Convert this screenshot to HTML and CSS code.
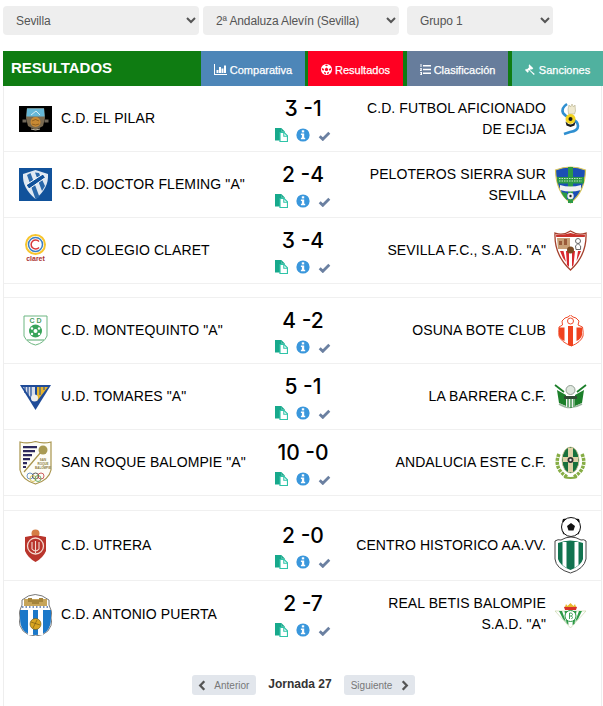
FILE: index.html
```html
<!DOCTYPE html>
<html lang="es">
<head>
<meta charset="utf-8">
<title>Resultados</title>
<link rel="stylesheet" href="styles.css">
</head>
<body>
<svg class="defs" width="0" height="0" aria-hidden="true">
  <symbol id="i-files" viewBox="0 0 13 14">
    <path d="M0 0h6.500v3.500h3.500v1H5.500v8H0z" fill="#17a98c"/>
    <path d="M6 .5h.8l3 3H6.800z" fill="#17a98c"/>
    <path d="M5 4.500h4.200l3.300 3.300v5.700H5z" fill="#fff" stroke="#2fc4a8" stroke-width="1.200"/>
    <path d="M8.800 4.800v3.400h3.400" fill="none" stroke="#2fc4a8" stroke-width="1.100"/>
  </symbol>
  <symbol id="i-info" viewBox="0 0 14 14">
    <circle cx="7" cy="7" r="6.600" fill="#3a97dc"/>
    <rect x="5.800" y="2.300" width="2.400" height="2.100" fill="#fff"/>
    <path d="M4.900 5.500h3.300v4.300h1v1.500H4.900V9.800h1V7H4.900z" fill="#fff"/>
  </symbol>
  <symbol id="i-check" viewBox="0 0 13 10">
    <path d="M1.700 5.200 4.800 8.300 11.300 1.800" fill="none" stroke="#6b80a1" stroke-width="2.800"/>
  </symbol>
</svg>

<form class="filters">
  <select class="filter filter-wide"><option>Sevilla</option></select>
  <select class="filter filter-wide"><option>2ª Andaluza Alevín (Sevilla)</option></select>
  <select class="filter filter-narrow"><option>Grupo 1</option></select>
</form>

<header class="bar">
  <h1 class="bar-title">RESULTADOS</h1>
  <nav class="tabs">
    <a class="tab tab-blue">
      <svg width="13" height="11" viewBox="0 0 13 11"><path d="M0 0h1v10h12v1H0z" fill="#fff"/><path d="M2.500 6h2v3h-2zM5 3h2v6H5zM7.500 4.500h2V9h-2zM10 1.500h2V9h-2z" fill="#fff"/></svg>
      Comparativa
    </a>
    <a class="tab tab-red">
      <svg width="11" height="11" viewBox="0 0 11 11"><circle cx="5.500" cy="5.500" r="5.500" fill="#fff"/><path d="M5.500 3.600 7.300 4.900 6.600 7H4.400L3.700 4.900zM5.500.6 3.900 1.200 5.500 2.300 7.100 1.200zM.9 4 1 5.900l1.600.9.500-1.900zM10.100 4 10 5.900l-1.600.9-.500-1.900zM3 9.300l2 1-.2-1.700-1.700-.5zM8 9.300l-2 1 .2-1.700 1.700-.5z" fill="#ff0022"/></svg>
      Resultados
    </a>
    <a class="tab tab-slate">
      <svg width="11" height="11" viewBox="0 0 11 11"><path d="M3 1h8v1.500H3zM3 4.700h8v1.500H3zM3 8.500h8V10H3zM.5 0h1v3h-1zM0 4.300h2v1L1 6.300h1v.7H0V6l1-1H0zM0 8h2v3H0v-.7h1v-.5H.5v-.6H1v-.5H0z" fill="#fff"/></svg>
      Clasificación
    </a>
    <a class="tab tab-teal">
      <svg width="11" height="11" viewBox="0 0 11 11"><path d="M4.200.3 8.300 4.300 6.800 5.800 6 5l-1 1 4.800 4-1 1L4 6 3.200 6.900l.7.700-1.200 1.200L0 6l1.200-1.200.6.600 2.500-2.500-.7-.700z" fill="#fff"/></svg>
      Sanciones
    </a>
  </nav>
</header>

<main class="panel">

  <article class="match">
    <div class="team">
      <svg class="crest" width="33" height="26" viewBox="0 0 33 26"><rect width="33" height="26" fill="#000"/><path d="M8 2h17l1 10-2 8-7.500 4-7.500-4-2-8z" fill="#7a6a50"/><path d="M8 2.500h17l.6 8H7.400z" fill="#66b8d8"/><path d="M12 9l5-4 4 4" stroke="#d8ecf2" fill="none"/><circle cx="16.500" cy="16" r="5" fill="#c98a34"/><path d="M13 15q3.500-3 7 0M13 18q3.500 2 7 0" stroke="#7a4f17" fill="none" stroke-width=".7"/><path d="M3.500 15h4M25.500 15h4" stroke="#6f6658" stroke-width="3"/><path d="M12 23q4.500 2 9 0" stroke="#c2b8a6" fill="none"/></svg>
      <span class="name">C.D. EL PILAR</span>
    </div>
    <div class="result">
      <div class="score">3 -1</div>
      <div class="actions"><svg class="a-files"><use href="#i-files"/></svg><svg class="a-info"><use href="#i-info"/></svg><svg class="a-check"><use href="#i-check"/></svg></div>
    </div>
    <div class="team team-away">
      <span class="name">C.D. FUTBOL AFICIONADO DE ECIJA</span>
      <svg class="crest" width="33" height="34" viewBox="0 0 33 34"><path d="M13 2Q7 6 9 11q2 3 7 5 8 3 8 8 0 5-8 6l-6 2" fill="none" stroke="#2f8fd0" stroke-width="2.600"/><path d="M14 7l1-4 1.500 2L18 2l1.500 3L21 3l.5 6-1 3h-6z" fill="#efe9cf" stroke="#a9a27a" stroke-width=".5"/><circle cx="16.500" cy="17" r="5" fill="#f2d21e"/><circle cx="16.500" cy="17" r="2" fill="#1b1b1b"/><path d="M11.500 19.500q5 6 10 0l-1 4-4 1.500-4-1.500z" fill="#1b1b1b"/></svg>
    </div>
  </article>

  <article class="match">
    <div class="team">
      <svg class="crest" width="33" height="33" viewBox="0 0 33 33"><rect width="33" height="33" fill="#11529b"/><path d="M16.500 2 29 6q1 14-12.500 25Q3 20 4 6z" fill="#dfe8f2"/><path d="M8 7l3.500-2 9 24-4 2zM16 4.500l4 .5 6 13-3 5z" fill="#2a68aa"/><path d="M7 17 24 6l2.500 3.500L10 21z" fill="#11529b" stroke="#fff" stroke-width="1"/></svg>
      <span class="name">C.D. DOCTOR FLEMING "A"</span>
    </div>
    <div class="result">
      <div class="score">2 -4</div>
      <div class="actions"><svg class="a-files"><use href="#i-files"/></svg><svg class="a-info"><use href="#i-info"/></svg><svg class="a-check"><use href="#i-check"/></svg></div>
    </div>
    <div class="team team-away">
      <span class="name">PELOTEROS SIERRA SUR SEVILLA</span>
      <svg class="crest" width="33" height="38" viewBox="0 0 33 38"><path d="M1.500 4q15-6 30 0-.5 22-15 33Q2 26 1.500 4z" fill="#1b4fb5" stroke="#d7c65a" stroke-width="1.200"/><path d="M14 1h5v36h-5z" fill="#2c9a45"/><path d="M3 11h27v6.500H3.500z" fill="#2c9a45"/><path d="M5 12.500h23M5 15h23" stroke="#e8f0e8" stroke-width=".8" stroke-dasharray="1.500 1"/><path d="M6 19q10.500 3 21 0v5q-10.500 3-21 0z" fill="#f1f1f1"/><circle cx="16.500" cy="30" r="3.200" fill="#eee"/><circle cx="16.500" cy="30" r="1.200" fill="#222"/><path d="M7 26q3 6 6 8v-7z" fill="#2c9a45"/></svg>
    </div>
  </article>

  <article class="match">
    <div class="team">
      <svg class="crest" width="33" height="33" viewBox="0 0 33 33"><circle cx="16.500" cy="10.500" r="9.500" fill="none" stroke="#f7c52d" stroke-width="2"/><circle cx="16.500" cy="10.500" r="7" fill="none" stroke="#3b7fc4" stroke-width="1.500"/><path d="M20 7.500a4.500 4.500 0 1 0 0 6" fill="none" stroke="#d8383a" stroke-width="1.500"/><text class="claret" x="16.500" y="27" text-anchor="middle">claret</text></svg>
      <span class="name">CD COLEGIO CLARET</span>
    </div>
    <div class="result">
      <div class="score">3 -4</div>
      <div class="actions"><svg class="a-files"><use href="#i-files"/></svg><svg class="a-info"><use href="#i-info"/></svg><svg class="a-check"><use href="#i-check"/></svg></div>
    </div>
    <div class="team team-away">
      <span class="name">SEVILLA F.C., S.A.D. "A"</span>
      <svg class="crest" width="33" height="41" viewBox="0 0 33 41"><path d="M1 3q8 3 15.500-2Q24 6 32 3q1 22-15.500 37Q0 25 1 3z" fill="#fff" stroke="#a5402c" stroke-width="1.300"/><path d="M2 4.500q7 1 14.500-1.500Q24 5.500 31 4.500l-.2 2.500H2.200z" fill="#c9322c"/><path d="M3 8h13v11H4z" fill="#c9a077"/><path d="M5 11h3v4H5zM10 9h3v6h-3z" fill="#9a5b3a"/><circle cx="24" cy="11" r="2.500" fill="none" stroke="#666" stroke-width="1"/><path d="M24 13.500q-4 2-2 6h4.500q1.500-4-2.500-6z" fill="none" stroke="#666" stroke-width="1"/><path d="M6 21h3.500l2.500 11-3-4zM12 21h3v16l-2-2zM18 21h3l-1.500 14-1.500 2zM24 21h3l-3 7-1.500 3z" fill="#d8282e"/><circle cx="16.500" cy="20" r="3.500" fill="#7a4a22"/></svg>
    </div>
  </article>

  <div class="spacer"></div>

  <article class="match">
    <div class="team">
      <svg class="crest" width="33" height="31" viewBox="0 0 33 31"><path d="M5 1h23v20q-3 7-11.500 9Q8 28 5 21z" fill="#fff" stroke="#6db681" stroke-width="1"/><text class="cd" x="16.500" y="8" text-anchor="middle">C D</text><circle cx="16.500" cy="16" r="6.500" fill="#38a35a"/><circle cx="16.500" cy="16" r="2" fill="#fff"/><circle cx="13" cy="13.500" r="1.200" fill="#fff"/><circle cx="20" cy="13.500" r="1.200" fill="#fff"/><circle cx="13" cy="19" r="1.200" fill="#fff"/><circle cx="20" cy="19" r="1.200" fill="#fff"/><path d="M8 25h17" stroke="#6db681" stroke-width="1.200"/></svg>
      <span class="name">C.D. MONTEQUINTO "A"</span>
    </div>
    <div class="result">
      <div class="score">4 -2</div>
      <div class="actions"><svg class="a-files"><use href="#i-files"/></svg><svg class="a-info"><use href="#i-info"/></svg><svg class="a-check"><use href="#i-check"/></svg></div>
    </div>
    <div class="team team-away">
      <span class="name">OSUNA BOTE CLUB</span>
      <svg class="crest" width="33" height="32" viewBox="0 0 33 32"><path d="M8 6l3-3 3-1 2.500-2L19 2l3 1 3 3-1 4 4.500 2q1 6 .5 9-2 6-11.500 10Q7 27 5 21q-.5-3 0-9l3.500-2z" fill="#fff" stroke="#ef4d2c" stroke-width="1"/><path d="M5 12.500h5.500V26Q6 24 5 20zM14 11h5v20h-2.500L14 30zM22.500 12.500H28V20q-1 4-5.500 6z" fill="#f0421f"/><circle cx="16.500" cy="6" r="3" fill="none" stroke="#ef4d2c"/></svg>
    </div>
  </article>

  <article class="match">
    <div class="team">
      <svg class="crest" width="33" height="26" viewBox="0 0 33 26"><path d="M1 1h31L16.500 26z" fill="#1f4b98"/><path d="M4 3h12v12l-2 2z" fill="#d9dee8"/><path d="M6 3v6M9 3v9M12 3v12" stroke="#1f4b98" stroke-width="1.200"/><path d="M18 3h11l-11 14z" fill="#e7b52c"/><path d="M21 3v8M25 3v3" stroke="#1f4b98"/><circle cx="15.500" cy="14" r="3.500" fill="#eee"/></svg>
      <span class="name">U.D. TOMARES "A"</span>
    </div>
    <div class="result">
      <div class="score">5 -1</div>
      <div class="actions"><svg class="a-files"><use href="#i-files"/></svg><svg class="a-info"><use href="#i-info"/></svg><svg class="a-check"><use href="#i-check"/></svg></div>
    </div>
    <div class="team team-away">
      <span class="name">LA BARRERA C.F.</span>
      <svg class="crest" width="33" height="26" viewBox="0 0 33 26"><path d="M1 1l9 7M32 1l-9 7" stroke="#1c7f2a" stroke-width="1.800"/><path d="M3 6l9 5v11L5 19zM30 6l-9 5v11l7-3z" fill="#1c7f2a"/><path d="M5 20q11 7 23 0" stroke="#9bb59f" stroke-width="1.500" fill="none"/><circle cx="16.500" cy="6" r="4.500" fill="#dfe7df" stroke="#7c8c7e" stroke-width=".8"/><path d="M10 12h13v3H10z" fill="#2f4a34"/><path d="M12 15h9v8h-9z" fill="#eef2ee"/><path d="M14 15v8M17 15v9M20 15v8" stroke="#1c7f2a" stroke-width="1.200"/></svg>
    </div>
  </article>

  <article class="match">
    <div class="team">
      <svg class="crest" width="33" height="44" viewBox="0 0 33 44"><path d="M1 1q8 2 15.500-.5Q24 3 32 1v28q-2 10-15.500 14Q3 39 1 29z" fill="#fdfdf6" stroke="#a8944c" stroke-width="1.200"/><path d="M4 5h14v2.200H4zM4 9h12v2.200H4zM4 13h9v2.200H4zM4 17h7v2.200H4zM4 21h4v2.200H4zM4 25h3v2H4z" fill="#2d2a5e"/><path d="M5 31 22 11" stroke="#a8944c" stroke-width="1.200"/><circle cx="24" cy="9" r="4.500" fill="#a89a52"/><text class="sr" x="24" y="20" text-anchor="middle">SAN</text><text class="sr" x="24" y="24" text-anchor="middle">ROQUE</text><text class="sr" x="24" y="28" text-anchor="middle">BALOMPIE</text><g fill="none" stroke-width=".8"><circle cx="11" cy="35" r="3" stroke="#4a7bc0"/><circle cx="16.500" cy="35" r="3" stroke="#333"/><circle cx="22" cy="35" r="3" stroke="#c23b3b"/><circle cx="14" cy="37.500" r="3" stroke="#d4b93c"/><circle cx="19" cy="37.500" r="3" stroke="#4f9c4f"/></g></svg>
      <span class="name">SAN ROQUE BALOMPIE "A"</span>
    </div>
    <div class="result">
      <div class="score">10 -0</div>
      <div class="actions"><svg class="a-files"><use href="#i-files"/></svg><svg class="a-info"><use href="#i-info"/></svg><svg class="a-check"><use href="#i-check"/></svg></div>
    </div>
    <div class="team team-away">
      <span class="name">ANDALUCIA ESTE C.F.</span>
      <svg class="crest" width="33" height="33" viewBox="0 0 33 33"><path d="M5 8q-6 14 8 23M28 8q6 14-8 23" fill="none" stroke="#86ad45" stroke-width="3.500" stroke-dasharray="3 1"/><ellipse cx="16.500" cy="14" rx="8.500" ry="13" fill="#17703c" stroke="#d9c89a" stroke-width=".8"/><path d="M14 2h5v24h-5z" fill="#e0d2a8"/><path d="M9 11h15v5H9z" fill="#e0d2a8"/><circle cx="16.500" cy="14" r="3" fill="#333"/><circle cx="16.500" cy="14" r="1.200" fill="#eee"/><path d="M10 31q6.500 2 13 0" stroke="#86ad45" stroke-width="2" fill="none"/></svg>
    </div>
  </article>

  <div class="spacer spacer-wide"></div>

  <article class="match">
    <div class="team">
      <svg class="crest" width="33" height="33" viewBox="0 0 33 33"><circle cx="16.500" cy="4.500" r="4" fill="#d57d45"/><path d="M6 8q10.500-3 21 0v14q-3 7-10.500 11Q9 29 6 22z" fill="#b9352c"/><circle cx="16.500" cy="17" r="8" fill="none" stroke="#f3d9cf" stroke-width="1.300"/><path d="M13 13v7q3.500 4 7 0v-7M16.500 12v12" fill="none" stroke="#f3d9cf" stroke-width="1.100"/></svg>
      <span class="name">C.D. UTRERA</span>
    </div>
    <div class="result">
      <div class="score">2 -0</div>
      <div class="actions"><svg class="a-files"><use href="#i-files"/></svg><svg class="a-info"><use href="#i-info"/></svg><svg class="a-check"><use href="#i-check"/></svg></div>
    </div>
    <div class="team team-away">
      <span class="name">CENTRO HISTORICO AA.VV.</span>
      <svg class="crest" width="33" height="57" viewBox="0 0 33 57"><circle cx="17" cy="10" r="9.500" fill="#fff" stroke="#111" stroke-width="1"/><path d="M17 6l4 3-1.500 4.500h-5L13 9zM12 1.500l-2 3 -2 .5 1-3zM22 1.500l2 3 2 .5-1-3zM8 12l2 5 2 1-3-1zM26 12l-2 5-2 1 3-1z" fill="#111"/><path d="M1 24q3-2 6-1 5-3 10-3t10 3q3-1 5 1v18q-2 10-15.500 14Q2 52 1 42z" fill="#fff" stroke="#444" stroke-width="1"/><path d="M4 26q12-5 25 0v16q-2 7-12.500 11Q6 49 4 42z" fill="#11734f"/><path d="M8.500 25h4v26l-4-3zM20.500 25h4v23l-4 3z" fill="#fff"/></svg>
    </div>
  </article>

  <article class="match">
    <div class="team">
      <svg class="crest" width="33" height="44" viewBox="0 0 33 44"><path d="M3 8Q16-3 30 8v5q3 5 3 13 0 17-16.500 18Q0 43 0 26q0-8 3-13z" fill="#fff" stroke="#555" stroke-width=".8"/><path d="M5 7h23v7H5z" fill="#c7a55a"/><path d="M9 6h4v4H9zM20 6h4v4h-4zM13 8h7v4h-7z" fill="#a4843b"/><path d="M1 18h31v8q0 17-15.500 17Q1 43 1 26z" fill="#1b78c9"/><path d="M9 18h5v25H9zM19 18h5v25h-5z" fill="#fff"/><circle cx="16.500" cy="32" r="5.500" fill="#d9a521" stroke="#6b5211" stroke-width=".6"/><path d="M12 30l9 3M14 36l4-8" stroke="#6b5211" stroke-width=".6"/><path d="M3 15h27" stroke="#4e6fa8" stroke-width="1.500" stroke-dasharray="1.500 2"/></svg>
      <span class="name">C.D. ANTONIO PUERTA</span>
    </div>
    <div class="result">
      <div class="score">2 -7</div>
      <div class="actions"><svg class="a-files"><use href="#i-files"/></svg><svg class="a-info"><use href="#i-info"/></svg><svg class="a-check"><use href="#i-check"/></svg></div>
    </div>
    <div class="team team-away">
      <span class="name">REAL BETIS BALOMPIE S.A.D. "A"</span>
      <svg class="crest" width="33" height="27" viewBox="0 0 33 27"><path d="M1 10h31L16.500 27z" fill="#fff" stroke="#b5c98f" stroke-width=".5"/><path d="M5 10h3l4 11-3-3zM10.500 10h3l1 14-2-2zM19.500 10h3l-2 13-2 1zM25 10h3l-4 8-3 3z" fill="#2e9a47"/><path d="M10 6q6.500-3 13 0l-1 3H11z" fill="#d8322a"/><path d="M12 3l1.500 2L16.500 2 19.500 5 21 3l1 3H11z" fill="#e8b92e"/><circle cx="16.500" cy="15" r="5.500" fill="#fff" stroke="#2e9a47"/><path d="M15.500 12v6M15.500 12h2l1 1.500-1 1.500h-2M17.500 15l1 1.500-1 1.500" stroke="#2e9a47" fill="none" stroke-width=".9"/></svg>
    </div>
  </article>

  <nav class="pager">
    <a class="pager-btn pager-prev"><svg width="8" height="11" viewBox="0 0 8 11"><path d="M6.300 1.200 2.200 5.500 6.300 9.800" fill="none" stroke="#555" stroke-width="2.300"/></svg>Anterior</a>
    <strong class="pager-label">Jornada 27</strong>
    <a class="pager-btn pager-next">Siguiente<svg width="8" height="11" viewBox="0 0 8 11"><path d="M1.700 1.200 5.800 5.500 1.700 9.800" fill="none" stroke="#555" stroke-width="2.300"/></svg></a>
  </nav>
</main>
</body>
</html>
```

FILE: styles.css
```css
* { box-sizing: border-box; }

html, body { margin: 0; padding: 0; background: #fff; }

body {
  font-family: "Liberation Sans", Arial, sans-serif;
  font-size: 14px;
  color: #000;
  overflow: hidden;
  height: 706px;
}

.defs { position: absolute; }

.filters {
  display: flex;
  gap: 4px;
  padding: 6px 0 0 3px;
}

.filter {
  height: 29px;
  border: 0;
  border-radius: 4px;
  background-color: #eee;
  color: #555;
  font-family: "Liberation Sans", Arial, sans-serif;
  font-size: 12px;
  letter-spacing: -.12px;
  padding: 0 9px;
}

.filter-wide { width: 196px; }
.filter-narrow { width: 146px; margin-left: 4px; }

.bar {
  display: flex;
  justify-content: space-between;
  height: 35px;
  margin: 16px 0 0 3px;
  background: #0f7c12;
}

.bar-title {
  margin: 0;
  padding-left: 8px;
  font-size: 15px;
  line-height: 33px;
  font-weight: 700;
  color: #fff;
}

.tabs { display: flex; gap: 3px; }

.tab {
  display: flex;
  align-items: center;
  justify-content: center;
  gap: 3px;
  color: #fff;
  font-size: 11px;
  font-weight: 400;
  -webkit-text-stroke: .25px #fff;
  padding-top: 2px;
}

.tab-blue { width: 104px; background: #4d86b8; }
.tab-red { width: 95px; background: #ff0022; }
.tab-slate { width: 101px; margin-left: 1px; background: #677d9c; }
.tab-teal { width: 91px; margin-left: 1px; background: #50b19f; }

.panel {
  margin: 0 1px 0 3px;
  border-left: 1px solid #eee;
  border-right: 1px solid #eee;
  height: 620px;
}

.match {
  display: grid;
  grid-template-columns: 1fr 66px 1fr;
  align-items: center;
  min-height: 66px;
  padding: 6px 14px 6px 15px;
  border-bottom: 1px solid #f0f0f0;
}

.match:last-of-type { border-bottom: 0; }

.team {
  display: flex;
  align-items: center;
  gap: 9px;
  min-width: 0;
  line-height: 21px;
}

.team-away { justify-content: flex-end; text-align: right; gap: 8px; }

.crest { flex: none; width: 33px; }

.name { display: block; letter-spacing: .1px; }

.team-away .name { max-width: 190px; }

.result {
  display: flex;
  flex-direction: column;
  align-items: center;
}

.score {
  font-family: Inter, "DejaVu Sans", sans-serif;
  font-feature-settings: "cv09" 1;
  font-weight: 500;
  font-size: 21px;
  line-height: 27px;
  white-space: nowrap;
}

.actions {
  display: flex;
  align-items: center;
  gap: 8px;
  height: 16px;
  margin-top: 5px;
}

.a-files { width: 13px; height: 14px; }
.a-info { width: 14px; height: 14px; }
.a-check { width: 13px; height: 10px; margin-top: 2px; }

.spacer {
  height: 14px;
  border-bottom: 1px solid #f0f0f0;
}

.spacer-wide { height: 15px; }

.pager {
  display: flex;
  justify-content: center;
  align-items: flex-start;
  gap: 12px;
  margin-top: 28px;
  padding-left: 2px;
}

.pager-btn {
  display: flex;
  align-items: center;
  height: 20px;
  border-radius: 3px;
  background: #e2e6ec;
  color: #777;
  font-size: 10px;
}

.pager-prev { width: 64px; padding-left: 6px; gap: 8px; }
.pager-next { width: 71px; padding-left: 7px; gap: 9px; }

.pager-label {
  font-size: 12px;
  line-height: 18px;
  color: #333;
}

.claret { font: 700 7px "Liberation Sans", sans-serif; fill: #a33; }
.cd { font: 700 7px "Liberation Sans", sans-serif; fill: #4c9e63; }
.sr { font: 700 3px "Liberation Sans", sans-serif; fill: #8a7a3a; }
```
